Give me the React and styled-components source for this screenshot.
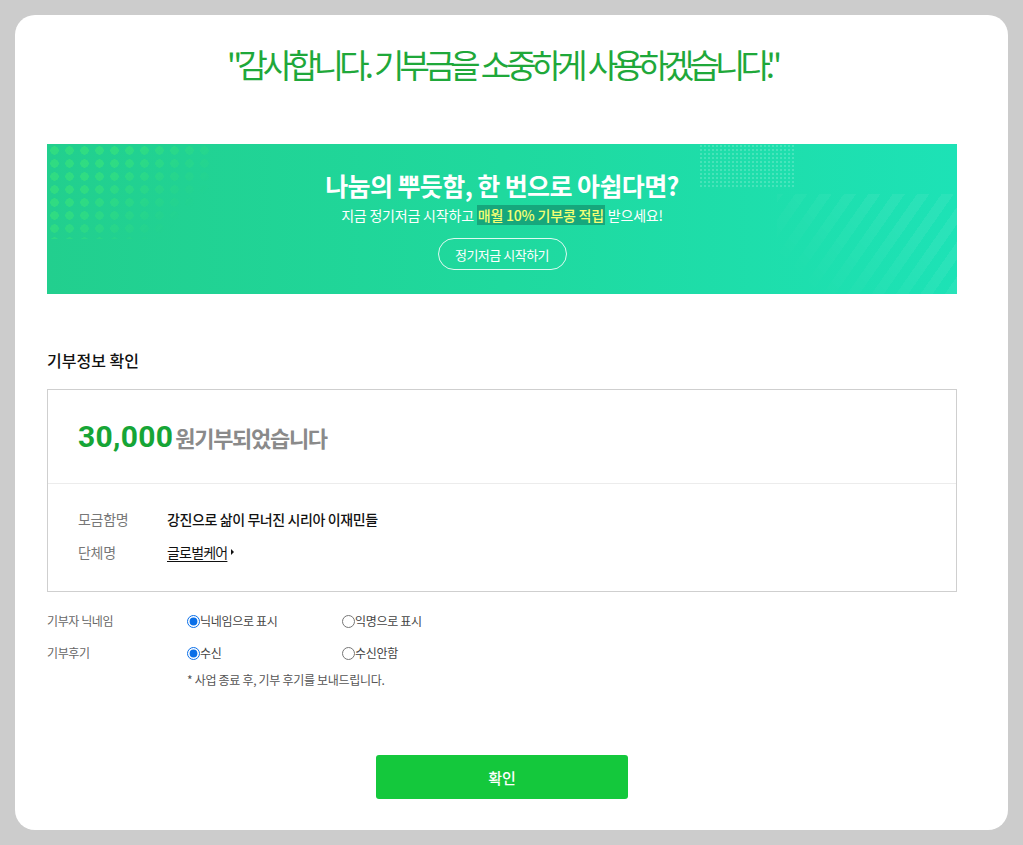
import React from "react"
import styled, { createGlobalStyle } from "styled-components"

const Global = createGlobalStyle`
  html, body {
    margin: 0;
    padding: 0;
    background: #cccccc;
    font-family: "Noto Sans CJK KR", "Noto Sans", sans-serif;
  }
`

const Page = styled.div`
  padding: 15px 15px 15px 15px;
  box-sizing: border-box;
  width: 1023px;
  height: 845px;
`

const Card = styled.main`
  background: #fff;
  border-radius: 20px;
  height: 815px;
  box-sizing: border-box;
  padding: 24px 51px 0 32px;
  display: flex;
  flex-direction: column;
`

const Thanks = styled.h1`
  margin: 0;
  text-align: center;
  color: #1fa83a;
  font-size: 33px;
  font-weight: 400;
  letter-spacing: -4.9px;
  word-spacing: 2.5px;
  line-height: 50px;
`

const Banner = styled.section`
  margin-top: 55px;
  height: 150px;
  position: relative;
  overflow: hidden;
  background: linear-gradient(90deg, #22cf8e 0%, #1fd99e 50%, #1de2b6 100%);
  display: flex;
  flex-direction: column;
  align-items: center;
  color: #fff;
`

const Dots = styled.div`
  position: absolute;
  left: 0;
  top: 0;
  width: 165px;
  height: 95px;
  background-image: radial-gradient(circle, rgba(60, 230, 120, 0.55) 4px, transparent 4.5px);
  background-size: 15px 13px;
  -webkit-mask-image: linear-gradient(135deg, #000 30%, transparent 80%);
  mask-image: linear-gradient(135deg, #000 30%, transparent 80%);
`

const SmallDots = styled.div`
  position: absolute;
  left: 652px;
  top: 0;
  width: 95px;
  height: 45px;
  background-image: radial-gradient(circle, rgba(255, 255, 255, 0.18) 1px, transparent 1.5px);
  background-size: 4px 4px;
`

const Stripes = styled.div`
  position: absolute;
  right: 0;
  bottom: 0;
  width: 180px;
  height: 100px;
  background: repeating-linear-gradient(
    -55deg,
    rgba(255, 255, 255, 0.06) 0 10px,
    transparent 10px 20px
  );
  -webkit-mask-image: linear-gradient(45deg, transparent 10%, #000 70%);
  mask-image: linear-gradient(45deg, transparent 10%, #000 70%);
`

const BannerTitle = styled.h2`
  margin: 25px 0 0;
  font-size: 25px;
  font-weight: 700;
  letter-spacing: -0.6px;
  line-height: 32px;
  position: relative;
`

const BannerSub = styled.p`
  margin: 4px 0 0;
  font-size: 14px;
  line-height: 20px;
  letter-spacing: -0.2px;
  position: relative;
`

const Mark = styled.span`
  background: #16a77c;
  color: #f4ff72;
  font-weight: 500;
  padding: 0 1px;
`

const PillButton = styled.button`
  margin-top: 13px;
  width: 129px;
  height: 32px;
  border: 1px solid rgba(255, 255, 255, 0.85);
  border-radius: 16px;
  background: transparent;
  color: #fff;
  font-family: inherit;
  font-size: 13px;
  letter-spacing: -0.5px;
  position: relative;
`

const SectionTitle = styled.h3`
  margin: 54px 0 0;
  font-size: 16px;
  font-weight: 500;
  color: #111;
  line-height: 24px;
`

const InfoBox = styled.section`
  margin-top: 17px;
  border: 1px solid #cfcfcf;
`

const AmountRow = styled.div`
  height: 93px;
  border-bottom: 1px solid #ececec;
  display: flex;
  align-items: center;
  padding: 0 30px 0;
`

const Amount = styled.strong`
  color: #16a536;
  font-family: Roboto, "Noto Sans", sans-serif;
  font-size: 30px;
  font-weight: 700;
  letter-spacing: 0.3px;
`

const AmountText = styled.span`
  color: #8a8a8a;
  font-size: 22px;
  font-weight: 700;
  letter-spacing: -1.3px;
  margin-left: 2px;
`

const Details = styled.dl`
  margin: 0;
  padding: 25px 30px 29px;
  display: grid;
  grid-template-columns: 89px 1fr;
  row-gap: 13px;
  font-size: 14px;
  line-height: 20px;
`

const Term = styled.dt`
  color: #777;
  letter-spacing: -0.3px;
`

const Value = styled.dd`
  margin: 0;
  color: #111;
  font-weight: 500;
  letter-spacing: -0.4px;
  display: flex;
  align-items: center;
`

const OrgLink = styled.a`
  color: #111;
  font-weight: 400;
  letter-spacing: -0.8px;
  text-decoration: underline;
  text-underline-offset: 3px;
`

const Caret = styled.span`
  width: 0;
  height: 0;
  border-top: 3px solid transparent;
  border-bottom: 3px solid transparent;
  border-left: 3px solid #111;
  margin-left: 4px;
`

const Options = styled.section`
  margin-top: 18px;
  display: grid;
  grid-template-columns: 140px 155px 1fr;
  row-gap: 10px;
  font-size: 12px;
  line-height: 22px;
  color: #555;
`

const OptLabel = styled.span`
  color: #666;
  letter-spacing: -0.4px;
`

const Radio = styled.label`
  display: flex;
  align-items: center;
  color: #444;
  letter-spacing: -0.3px;

  input {
    margin: 0;
    width: 13px;
    height: 13px;
    accent-color: #0a6fe8;
  }
`

const Note = styled.p`
  grid-column: 2 / 4;
  margin: -5px 0 0;
  color: #555;
  font-size: 12px;
  letter-spacing: -0.3px;
`

const Confirm = styled.button`
  align-self: center;
  margin: 64px 0 0;
  width: 252px;
  height: 44px;
  border: 0;
  border-radius: 3px;
  background: #14c83c;
  color: #fff;
  font-family: inherit;
  font-size: 15px;
  font-weight: 500;
`

export default function App() {
  return (
    <Page>
      <Global />
      <Card>
        <Thanks>"감사합니다. 기부금을 소중하게 사용하겠습니다."</Thanks>

        <Banner>
          <Dots />
          <SmallDots />
          <Stripes />
          <BannerTitle>나눔의 뿌듯함, 한 번으로 아쉽다면?</BannerTitle>
          <BannerSub>
            지금 정기저금 시작하고 <Mark>매월 10% 기부콩 적립</Mark> 받으세요!
          </BannerSub>
          <PillButton>정기저금 시작하기</PillButton>
        </Banner>

        <SectionTitle>기부정보 확인</SectionTitle>
        <InfoBox>
          <AmountRow>
            <Amount>30,000</Amount>
            <AmountText>원기부되었습니다</AmountText>
          </AmountRow>
          <Details>
            <Term>모금함명</Term>
            <Value>강진으로 삶이 무너진 시리아 이재민들</Value>
            <Term>단체명</Term>
            <Value>
              <OrgLink href="#">글로벌케어</OrgLink>
              <Caret />
            </Value>
          </Details>
        </InfoBox>

        <Options>
          <OptLabel>기부자 닉네임</OptLabel>
          <Radio>
            <input type="radio" name="nick" defaultChecked />
            닉네임으로 표시
          </Radio>
          <Radio>
            <input type="radio" name="nick" />
            익명으로 표시
          </Radio>
          <OptLabel>기부후기</OptLabel>
          <Radio>
            <input type="radio" name="review" defaultChecked />
            수신
          </Radio>
          <Radio>
            <input type="radio" name="review" />
            수신안함
          </Radio>
          <Note>* 사업 종료 후, 기부 후기를 보내드립니다.</Note>
        </Options>

        <Confirm>확인</Confirm>
      </Card>
    </Page>
  )
}
